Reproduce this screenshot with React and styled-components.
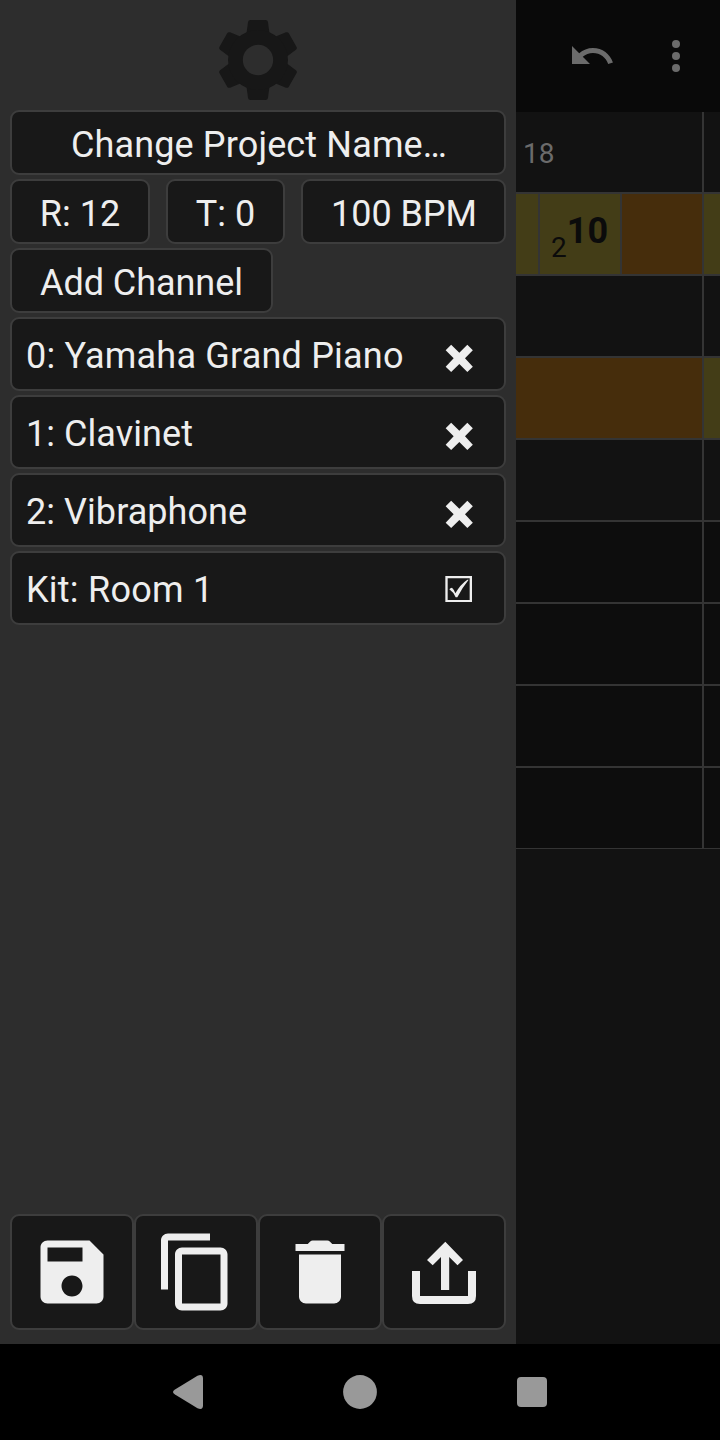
import React from "react";
import styled, { createGlobalStyle } from "styled-components";

const GlobalStyle = createGlobalStyle`
  * { box-sizing: border-box; }
  body { margin: 0; background: #000; }
`;

const Screen = styled.div`
  display: flex;
  flex-direction: column;
  width: 720px;
  height: 1440px;
  overflow: hidden;
  background: #000;
  font-family: Roboto, "Liberation Sans", sans-serif;
`;

const Workspace = styled.div`
  display: grid;
  grid-template-columns: 516px 204px;
  height: 1344px;
`;

const Drawer = styled.aside`
  display: flex;
  flex-direction: column;
  padding: 12px 10px 14px;
  background: #2d2d2d;
`;

const GearIcon = styled.svg`
  display: block;
  width: 96px;
  height: 96px;
  margin: 0 auto 2px;
  fill: #171717;
`;

const Stack = styled.div`
  display: flex;
  flex-direction: column;
  gap: 4px;
`;

const SettingsRow = styled.div`
  display: flex;
  justify-content: space-between;
`;

const Button = styled.button`
  width: ${(p) => p.$width}px;
  height: 65px;
  padding: 5px 0 0 ${(p) => p.$indent || 0}px;
  border: 2px solid #3d3d3d;
  border-radius: 9px;
  background: #181818;
  color: #eee;
  font: 400 36px/42px Roboto, "Liberation Sans", sans-serif;
  letter-spacing: ${(p) => p.$spacing || 0}px;
  white-space: nowrap;
`;

const ChannelRow = styled.div`
  display: flex;
  align-items: center;
  justify-content: space-between;
  height: 74px;
  padding: 0 30px 0 14px;
  border: 2px solid #3d3d3d;
  border-radius: 9px;
  background: #181818;
`;

const ChannelName = styled.span`
  padding-top: 4px;
  color: #eee;
  font-size: 36px;
  line-height: 42px;
  letter-spacing: ${(p) => p.$spacing || 0}px;
  white-space: nowrap;
`;

const MarkIcon = styled.svg`
  display: block;
  width: 30px;
  height: 74px;
  margin: -2px 0;
  fill: #eee;
`;

const ActionBar = styled.div`
  display: flex;
  margin-top: auto;
`;

const ActionButton = styled.button`
  display: flex;
  flex: 1;
  align-items: center;
  justify-content: center;
  height: 116px;
  padding: 0;
  border: 2px solid #3d3d3d;
  border-radius: 9px;
  background: #181818;
`;

const ActionIcon = styled.svg`
  display: block;
  width: 84px;
  height: 84px;
  fill: #eee;
`;

const Editor = styled.main`
  display: flex;
  flex-direction: column;
  background: #121212;
  overflow: hidden;
`;

const Toolbar = styled.header`
  display: flex;
  gap: 36px;
  align-items: center;
  justify-content: flex-end;
  height: 112px;
  padding-right: 20px;
  background: #090909;
`;

const ToolbarIcon = styled.svg`
  display: block;
  width: 48px;
  height: 48px;
  fill: #6b6b6b;
`;

const Table = styled.div`
  border-bottom: 1px solid #343434;
`;

const Line = styled.div`
  display: flex;
  height: ${(p) => (p.$header ? 80 : 82)}px;
  border-top: ${(p) => (p.$header ? 0 : 2)}px solid #343434;
`;

const tones = {
  header: "#121212",
  plain: "#121212",
  dark: "#0d0d0d",
  leaf: "#433d17",
  rest: "#462d0c",
};

const Cell = styled.div`
  width: ${(p) => p.$width}px;
  flex: none;
  background: ${(p) => tones[p.$tone]};
  border-left: ${(p) => (p.$first ? 0 : 2)}px solid #343434;
`;

const BeatNumber = styled.div`
  padding: 25px 0 0 7px;
  color: #6b6b6b;
  font-size: 28px;
  line-height: 33px;
`;

const Note = styled.div`
  display: flex;
  padding-left: 11px;
  color: #0b0b0b;
`;

const Octave = styled.span`
  padding-top: 37px;
  font-size: 28px;
  line-height: 33px;
`;

const Pitch = styled.span`
  padding-top: 16px;
  font-size: 36px;
  font-weight: 700;
  line-height: 42px;
`;

const NavBar = styled.nav`
  display: flex;
  gap: 132px;
  align-items: center;
  justify-content: center;
  height: 96px;
  background: #000;
`;

const NavIcon = styled.svg`
  display: block;
  width: 40px;
  height: 40px;
  fill: #999;
`;

const TOOTH = "M140 97L144 66Q145 60 151 60H197Q203 60 204 66L208 97V180H140Z";

function Gear() {
  return (
    <GearIcon viewBox="30 36 288 288">
      {[0, 60, 120, 180, 240, 300].map((a) => (
        <path key={a} d={TOOTH} transform={`rotate(${a} 174 180)`} />
      ))}
      <circle cx="174" cy="180" r="90" />
      <circle cx="174" cy="180" r="45.5" fill="#2d2d2d" />
    </GearIcon>
  );
}

function RemoveMark() {
  return (
    <MarkIcon viewBox="132 21 90 222">
      <path d="M153.5 104.5L178 128.5L202 104.5L218.5 121L195 145L218.5 170L202 186L178 162L153.5 186L137 170L161 145L137 121Z" />
    </MarkIcon>
  );
}

function CheckMark() {
  return (
    <MarkIcon viewBox="132 723 90 222">
      <path fillRule="evenodd" d="M136 798H216V876H136ZM143 805V870H209V805Z" />
      <path d="M148 838Q151 833 156 833Q162 838 166 850Q181 823 202 809H206Q187 832 172 862H167Q160 846 148 838Z" />
    </MarkIcon>
  );
}

const channels = [
  { name: "0: Yamaha Grand Piano", spacing: 0.2 },
  { name: "1: Clavinet", spacing: 0.06 },
  { name: "2: Vibraphone", spacing: 0.06 },
];

const actions = [
  "M17 3H5c-1.11 0-2 .9-2 2v14c0 1.1.89 2 2 2h14c1.1 0 2-.9 2-2V7l-4-4zm-5 16c-1.66 0-3-1.34-3-3s1.34-3 3-3 3 1.34 3 3-1.34 3-3 3zm3-10H5V5h10v4z",
  "M16 1H4c-1.1 0-2 .9-2 2v14h2V3h12V1zm3 4H8c-1.1 0-2 .9-2 2v14c0 1.1.9 2 2 2h11c1.1 0 2-.9 2-2V7c0-1.1-.9-2-2-2zm0 16H8V7h11v14z",
  "M6 19c0 1.1.9 2 2 2h8c1.1 0 2-.9 2-2V7H6v12zM19 4h-3.5l-.71-.71c-.18-.18-.44-.29-.7-.29H9.91c-.26 0-.52.11-.7.29L8.5 4H5v2h14V4z",
];

export default function App() {
  return (
    <Screen>
      <GlobalStyle />
      <Workspace>
        <Drawer>
          <Gear />
          <Stack>
            <Button $width={496} $spacing={0.14} $indent={2}>
              Change Project Name…
            </Button>
            <SettingsRow>
              <Button $width={140}>R: 12</Button>
              <Button $width={119}>T: 0</Button>
              <Button $width={205} $spacing={-0.06} $indent={1}>
                100 BPM
              </Button>
            </SettingsRow>
            <Button $width={263} $spacing={-0.06}>
              Add Channel
            </Button>
            {channels.map(({ name, spacing }) => (
              <ChannelRow key={name}>
                <ChannelName $spacing={spacing}>{name}</ChannelName>
                <RemoveMark />
              </ChannelRow>
            ))}
            <ChannelRow>
              <ChannelName $spacing={0.25}>Kit: Room 1</ChannelName>
              <CheckMark />
            </ChannelRow>
          </Stack>
          <ActionBar>
            {actions.map((d) => (
              <ActionButton key={d}>
                <ActionIcon viewBox="0 0 24 24">
                  <path d={d} />
                </ActionIcon>
              </ActionButton>
            ))}
            <ActionButton>
              <ActionIcon viewBox="0 0 84 84">
                <path d="M10 41H18V66H66V41H74V66Q74 74 66 74H18Q10 74 10 66Z" />
                <path d="M43.3 11.7L61 30L55.5 35.2L47.2 27V60H39V27L30.7 35.2L25 30Z" />
              </ActionIcon>
            </ActionButton>
          </ActionBar>
        </Drawer>

        <Editor>
          <Toolbar>
            <ToolbarIcon viewBox="0 0 24 24">
              <path d="M12.5 8c-2.65 0-5.05.99-6.9 2.6L2 7v9h9l-3.62-3.62c1.39-1.16 3.16-1.88 5.12-1.88 3.54 0 6.55 2.31 7.6 5.5l2.37-.78C21.08 11.03 17.15 8 12.5 8z" />
            </ToolbarIcon>
            <ToolbarIcon viewBox="0 0 24 24">
              <circle cx="12" cy="6" r="2" />
              <circle cx="12" cy="12" r="2" />
              <circle cx="12" cy="18" r="2" />
            </ToolbarIcon>
          </Toolbar>
          <Table>
            <Line $header>
              <Cell $first $width={186} $tone="header">
                <BeatNumber>18</BeatNumber>
              </Cell>
              <Cell $width={18} $tone="header" />
            </Line>
            <Line>
              <Cell $first $width={22} $tone="leaf" />
              <Cell $width={82} $tone="leaf">
                <Note>
                  <Octave>2</Octave>
                  <Pitch>10</Pitch>
                </Note>
              </Cell>
              <Cell $width={82} $tone="rest" />
              <Cell $width={18} $tone="leaf" />
            </Line>
            {["plain", "rest", "plain", "dark", "dark", "dark", "dark"].map((tone, i) => (
              <Line key={i}>
                <Cell $first $width={186} $tone={tone} />
                <Cell $width={18} $tone={tone === "rest" ? "leaf" : tone} />
              </Line>
            ))}
          </Table>
        </Editor>
      </Workspace>
      <NavBar>
        <NavIcon viewBox="0 0 40 40">
          <path d="M7 17.5L29.5 3.7Q35 1.5 35 6.5V33.5Q35 38.5 29.5 36.3L7 22.5Q3 20 7 17.5Z" />
        </NavIcon>
        <NavIcon viewBox="0 0 40 40">
          <circle cx="20" cy="20" r="16.9" />
        </NavIcon>
        <NavIcon viewBox="0 0 40 40">
          <rect x="5" y="5" width="30" height="30" rx="4" />
        </NavIcon>
      </NavBar>
    </Screen>
  );
}
